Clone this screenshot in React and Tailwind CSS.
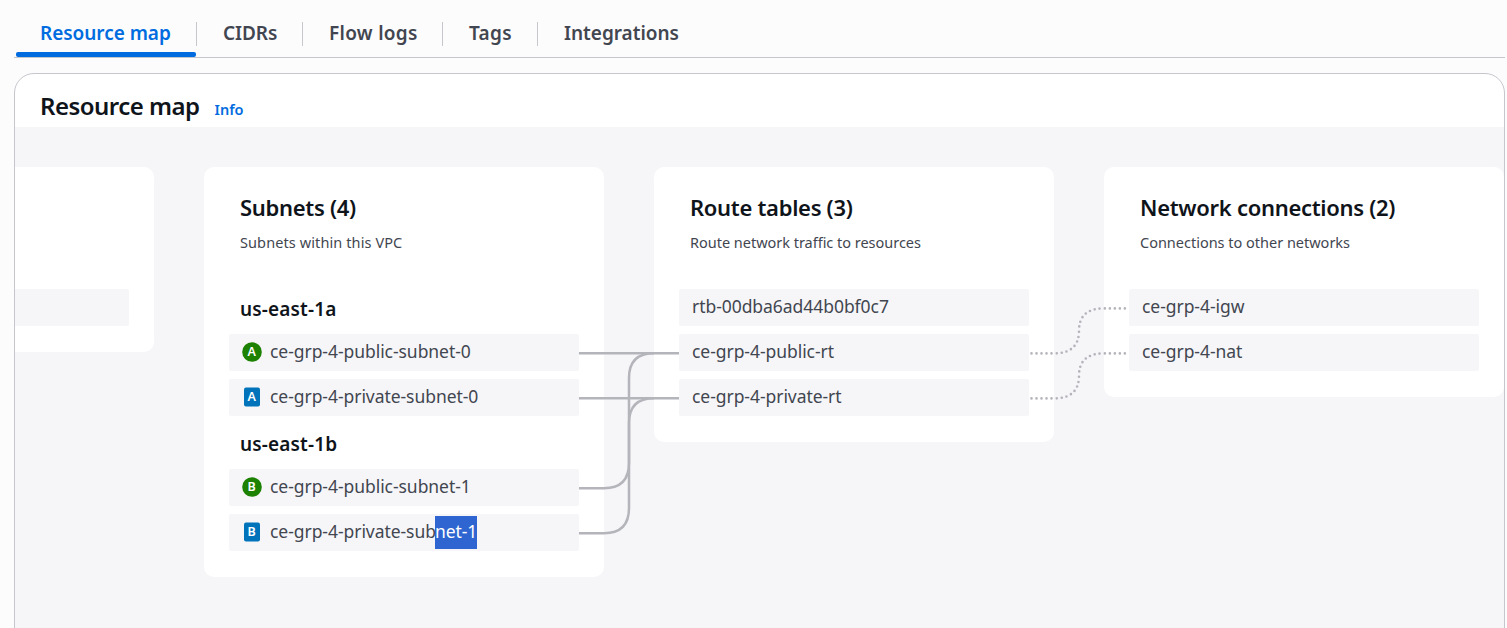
const tabs = [
  { label: "Resource map", box: "w-[181px] pl-[24px] text-[#006ce0]", text: "tracking-[-0.04px]", active: true },
  { label: "CIDRs", box: "w-[106px] pl-[26px] text-[#424650]", text: "tracking-[-0.1px]" },
  { label: "Flow logs", box: "w-[140px] pl-[26px] text-[#424650]", text: "tracking-[0.3px]" },
  { label: "Tags", box: "w-[95px] pl-[26px] text-[#424650]", text: "tracking-[0.3px]" },
  { label: "Integrations", box: "pl-[26px] text-[#424650]", text: "tracking-[-0.02px]", last: true },
];

function Tab({ label, box, text, active, last }) {
  return (
    <div className={"relative flex h-[57px] shrink-0 items-center pb-[1px] pt-[10px] text-[19px] font-semibold leading-[23px] " + box}>
      <span className={"whitespace-nowrap " + text}>{label}</span>
      {!last && <span className="absolute right-0 top-[22px] h-[24px] w-px bg-[#c6c6cd]" />}
      {active && <span className="absolute bottom-0 left-0 h-[5px] w-[180px] rounded-[2px] bg-[#006ce0]" />}
    </div>
  );
}

function Column({ title, subtitle, track, children }) {
  return (
    <section className="h-fit w-[400px] shrink-0 rounded-[10px] bg-white px-[25px] pb-[26px]">
      <header className="h-[122px] pl-[11px] pt-[26px]">
        <h3 className="h-[28px] whitespace-nowrap text-[22px] font-semibold leading-[28px] tracking-[-0.3px] text-[#0f141a]">{title}</h3>
        <p className={"mt-[11px] whitespace-nowrap text-[14.5px] leading-[20px] text-[#424650] " + track}>{subtitle}</p>
      </header>
      <div className="flex flex-col gap-2">{children}</div>
    </section>
  );
}

function Badge({ letter, kind }) {
  return (
    <svg className="mr-[8px] shrink-0" width="20" height="20" viewBox="0 0 20 20">
      {kind === "public" ? (
        <circle cx="10" cy="10" r="9.8" fill="#1d8102" />
      ) : (
        <rect x="2" y="0.5" width="16" height="19" rx="2" fill="#0073bb" />
      )}
      <text x="9.6" y="14.2" textAnchor="middle" fill="#fff" fontFamily="Noto Sans, sans-serif" fontSize="12.5" fontWeight="600">
        {letter}
      </text>
    </svg>
  );
}

function Row({ name, badge, kind, selected }) {
  return (
    <div className="flex h-[37px] items-center rounded-[2px] bg-[#f6f6f9] pb-[1.5px] pl-[13px] text-[17.5px] leading-[33px] tracking-[-0.05px] text-[#424650]">
      {badge && <Badge letter={badge} kind={kind} />}
      <span className="whitespace-nowrap">{name}</span>
      {selected && (
        <span className="-ml-px mt-[1.5px] h-[33px] bg-[#2f65d0] text-white">
          <span className="relative -top-px">{selected}</span>
        </span>
      )}
    </div>
  );
}

function Zone({ name }) {
  return (
    <h4 className="h-[37px] pl-[11px] pt-[7px] text-[19px] font-semibold leading-[26px] tracking-[0.15px] text-[#0f141a]">{name}</h4>
  );
}

function Links() {
  return (
    <svg className="pointer-events-none absolute left-0 top-0" width="1489" height="501" viewBox="15 127 1489 501" fill="none" stroke="#b4b4bb">
      <g strokeWidth="2.5">
        <path d="M579 353.2H679" />
        <path d="M579 398.2H679" />
        <path d="M579 488.2H604Q629 488.2 629 463V378Q629 353.2 654 353.2" />
        <path d="M579 533.2H604Q629 533.2 629 508V423Q629 398.2 654 398.2" />
      </g>
      <g strokeWidth="2.6" strokeLinecap="round" strokeDasharray="0 5">
        <path d="M1031.5 353.4H1054Q1079 353.4 1079 330.7Q1079 308.4 1104 308.4H1129" />
        <path d="M1031.5 398.4H1054Q1079 398.4 1079 375.7Q1079 353.4 1104 353.4H1129" />
      </g>
    </svg>
  );
}

export default function App() {
  return (
    <div className="flex h-[628px] w-[1507px] flex-col overflow-hidden bg-[#fcfcfd] font-['Noto_Sans',sans-serif]">
      <nav className="ml-[14px] flex h-[58px] w-[1491px] shrink-0 border-b border-[#c6c6cd] pl-[2px]">
        {tabs.map((t) => (
          <Tab key={t.label} {...t} />
        ))}
      </nav>
      <main className="ml-[14px] mt-[15px] flex h-[600px] w-[1491px] shrink-0 flex-col overflow-hidden rounded-t-[20px] border border-[#c6c6cd] bg-white">
        <header className="flex h-[53px] shrink-0 items-baseline pl-[25px] pt-[16px]">
          <h2 className="whitespace-nowrap text-[24px] font-semibold leading-[32px] tracking-[-0.52px] text-[#0f141a]">Resource map</h2>
          <a className="ml-[15px] text-[14.5px] font-semibold leading-[20px] text-[#006ce0]">Info</a>
        </header>
        <div className="relative flex flex-1 items-start justify-end gap-[50px] bg-[#f6f6f9] pt-[40px]">
          <section className="-ml-[261px] w-[400px] shrink-0 rounded-[10px] bg-white px-[25px] pb-[26px] pt-[122px]">
            <div className="h-[37px] rounded-[2px] bg-[#f6f6f9]" />
          </section>
          <Column title="Subnets (4)" subtitle="Subnets within this VPC" track="tracking-[0.1px]">
            <Zone name="us-east-1a" />
            <Row name="ce-grp-4-public-subnet-0" badge="A" kind="public" />
            <Row name="ce-grp-4-private-subnet-0" badge="A" kind="private" />
            <Zone name="us-east-1b" />
            <Row name="ce-grp-4-public-subnet-1" badge="B" kind="public" />
            <Row name="ce-grp-4-private-sub" selected="net-1" badge="B" kind="private" />
          </Column>
          <Column title="Route tables (3)" subtitle="Route network traffic to resources" track="tracking-[-0.02px]">
            <Row name="rtb-00dba6ad44b0bf0c7" />
            <Row name="ce-grp-4-public-rt" />
            <Row name="ce-grp-4-private-rt" />
          </Column>
          <Column title="Network connections (2)" subtitle="Connections to other networks" track="tracking-[-0.01px]">
            <Row name="ce-grp-4-igw" />
            <Row name="ce-grp-4-nat" />
          </Column>
          <Links />
        </div>
      </main>
    </div>
  );
}
